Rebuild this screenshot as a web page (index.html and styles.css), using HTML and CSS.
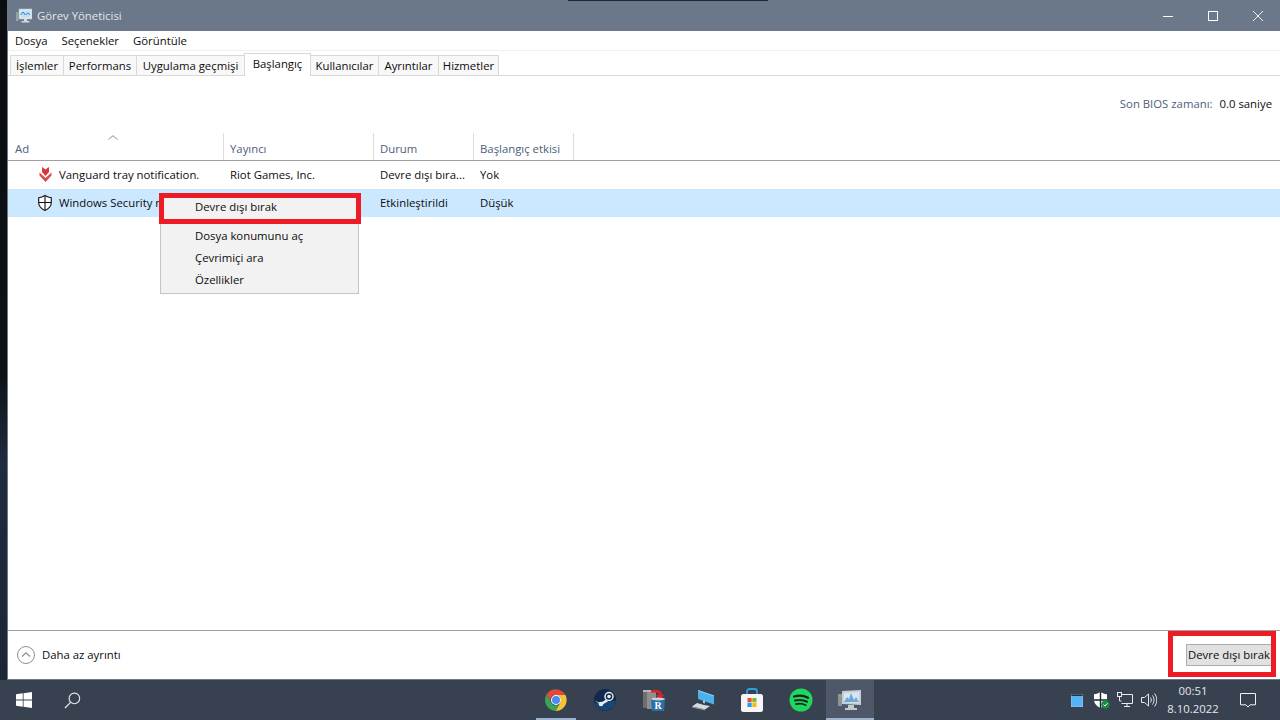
FILE: index.html
```html
<!DOCTYPE html>
<html lang="tr">
<head>
    <meta charset="UTF-8">
    <title>Görev Yöneticisi</title>
    <link rel="stylesheet" href="styles.css">
</head>
<body>
    <div class="desktop">
        <div class="window">
            <div class="titlebar">
                <svg class="app-icon" width="16" height="16" viewBox="0 0 16 16">
                    <rect x="0" y="4" width="2.5" height="9" fill="#9aa0a0"/>
                    <rect x="0.5" y="5" width="1.5" height="1.5" fill="#5fbf5f"/>
                    <rect x="3" y="1" width="13" height="10" fill="#e8ecef" stroke="#b9c0c6" stroke-width="0.6"/>
                    <rect x="4.5" y="2.5" width="10" height="7" fill="#bfe0f7"/>
                    <path d="M4.5 7l2.5-3 2.5 3 2-2 2.5 1.5" fill="none" stroke="#2b7fd0" stroke-width="1"/>
                    <path d="M8 11h3v2h2.5v1.5h-8V13H8z" fill="#d5d9dc"/>
                </svg>
                <span class="title-text">Görev Yöneticisi</span>
                <div class="window-controls">
                    <div class="win-btn"><svg width="10" height="10" viewBox="0 0 10 10"><path d="M0 5.5h10" stroke="#fff" fill="none"/></svg></div>
                    <div class="win-btn"><svg width="10" height="10" viewBox="0 0 10 10"><rect x="0.5" y="0.5" width="9" height="9" stroke="#fff" fill="none"/></svg></div>
                    <div class="win-btn"><svg width="10" height="10" viewBox="0 0 10 10"><path d="M0 0l10 10M10 0L0 10" stroke="#eef0f2" fill="none"/></svg></div>
                </div>
            </div>

            <div class="menubar">
                <span>Dosya</span>
                <span>Seçenekler</span>
                <span>Görüntüle</span>
            </div>

            <div class="tabs">
                <div class="tab">İşlemler</div>
                <div class="tab">Performans</div>
                <div class="tab">Uygulama geçmişi</div>
                <div class="tab active">Başlangıç</div>
                <div class="tab">Kullanıcılar</div>
                <div class="tab">Ayrıntılar</div>
                <div class="tab">Hizmetler</div>
            </div>

            <div class="content">
                <div class="bios-row">
                    <span class="bios-label">Son BIOS zamanı:</span>
                    <span>0.0 saniye</span>
                </div>

                <div class="table-head">
                    <div class="head-cell head-name">Ad
                        <svg class="sort-caret" width="10" height="5" viewBox="0 0 10 5"><path d="M0.5 4.5L5 0.7l4.5 3.8" fill="none" stroke="#8d8d8d"/></svg>
                    </div>
                    <div class="head-cell">Yayıncı</div>
                    <div class="head-cell">Durum</div>
                    <div class="head-cell">Başlangıç etkisi</div>
                </div>

                <div class="table-row">
                    <div class="name-cell">
                        <svg class="row-icon" width="16" height="18" viewBox="0 0 16 18">
                            <path d="M5 1l3.500 2.500L12 1v5l-3.500 4L5 6z" fill="#d9363c"/>
                            <path d="M2.500 6.500l6 5.500 6-5.500v3L8.500 16l-6-6.500z" fill="#e0474d"/>
                        </svg>
                        <span class="name-text">Vanguard tray notification.</span>
                    </div>
                    <div class="cell">Riot Games, Inc.</div>
                    <div class="cell">Devre dışı bıra...</div>
                    <div class="cell">Yok</div>
                </div>
                <div class="table-row selected">
                    <div class="name-cell">
                        <svg class="row-icon" width="16" height="18" viewBox="0 0 16 18">
                            <path d="M8 1.500c2 1.300 4 2 6.300 2.200v5c0 3.500-2.600 6-6.300 7.800-3.700-1.800-6.300-4.300-6.300-7.800v-5C4 3.500 6 2.800 8 1.500z" fill="#fff" stroke="#111" stroke-width="1.100"/>
                            <path d="M8 2v14M2 8.500h12" stroke="#111" stroke-width="1.100" fill="none"/>
                        </svg>
                        <span class="name-text">Windows Security n</span>
                    </div>
                    <div class="cell"></div>
                    <div class="cell">Etkinleştirildi</div>
                    <div class="cell">Düşük</div>
                </div>
            </div>

            <div class="footer">
                <div class="less-detail">
                    <svg width="18" height="18" viewBox="0 0 18 18">
                        <circle cx="9" cy="9" r="8.500" fill="#fff" stroke="#8e8e8e"/>
                        <path d="M5 10.500L9 6.800l4 3.700" fill="none" stroke="#8e8e8e" stroke-width="1.200"/>
                    </svg>
                    <span class="less-text">Daha az ayrıntı</span>
                </div>
                <button class="disable-btn" type="button">Devre dışı bırak</button>
            </div>

            <div class="context-menu">
                <div class="menu-item">Devre dışı bırak</div>
                <div class="menu-sep"></div>
                <div class="menu-item">Dosya konumunu aç</div>
                <div class="menu-item">Çevrimiçi ara</div>
                <div class="menu-item">Özellikler</div>
            </div>
            <div class="red-box red-menu"></div>
            <div class="red-box red-button"></div>
        </div>
    </div>

    <div class="taskbar">
        <div class="task-left">
            <div class="task-slot">
                <svg width="16" height="16" viewBox="0 0 18 18"><path d="M0 2.600l7.600-1.100v7H0zM8.500 1.400L18 0v8.500H8.500zM0 9.500h7.600v7L0 15.400zM8.500 9.500H18V18l-9.500-1.400z" fill="#fff"/></svg>
            </div>
            <div class="task-slot">
                <svg width="17" height="17" viewBox="0 0 18 18"><circle cx="11" cy="6.800" r="5.600" fill="none" stroke="#e8eaec" stroke-width="1.200"/><path d="M7 11L1 17" stroke="#e8eaec" stroke-width="1.300"/></svg>
            </div>
        </div>

        <div class="task-apps">
            <div class="app-slot running">
                <svg width="24" height="24" viewBox="0 0 24 24">
                    <path d="M12 7h9.500A11 11 0 0 0 2.500 6.500l4.700 8.200A5 5 0 0 1 12 7z" fill="#e04a3a"/>
                    <path d="M21.500 7H12a5 5 0 0 1 4.300 7.500L11.600 23A11 11 0 0 0 21.500 7z" fill="#f6c333"/>
                    <path d="M2.500 6.500A11 11 0 0 0 11.600 23l4.700-8.500a5 5 0 0 1-9.100.2z" fill="#3aa655"/>
                    <circle cx="12" cy="12" r="5" fill="#fff"/>
                    <circle cx="12" cy="12" r="4" fill="#4a8bf0"/>
                </svg>
            </div>
            <div class="app-slot">
                <svg width="24" height="24" viewBox="0 0 24 24">
                    <circle cx="12" cy="12" r="11" fill="#12294f"/>
                    <path d="M1.500 15a11 11 0 0 0 21 0c.7-3-1-3-3-2l-8 2-6 0z" fill="#17548a" opacity="0.7"/>
                    <circle cx="16" cy="8.500" r="4" fill="none" stroke="#e8edf2" stroke-width="1.500"/>
                    <circle cx="16" cy="8.500" r="1.800" fill="#e8edf2"/>
                    <path d="M1.500 12.500l6 2.500 5.500-3.500 2 2-6.500 3.500z" fill="#e8edf2"/>
                    <circle cx="8" cy="16" r="2.300" fill="#e8edf2"/>
                </svg>
            </div>
            <div class="app-slot">
                <svg width="24" height="24" viewBox="0 0 24 24">
                    <rect x="1" y="3" width="8" height="17" fill="#6e6e6e"/>
                    <rect x="5" y="2" width="9" height="19" fill="#8f8f8f"/>
                    <rect x="1" y="2" width="12" height="2" fill="#b5b5b5"/>
                    <path d="M9 2h5c4 0 6 2 6 5h2.500L18 12l-4-5h3c0-1.500-1-2.500-3-2.500H9z" fill="#d92328"/>
                    <path d="M9 11h14l-1 12H10z" fill="#2c6ea8"/>
                    <ellipse cx="16" cy="11" rx="7" ry="1.500" fill="#c9d3da"/>
                    <text class="bin-letter" x="16" y="21">R</text>
                </svg>
            </div>
            <div class="app-slot">
                <svg width="24" height="24" viewBox="0 0 24 24">
                    <path d="M7 2l16 5.500v9L7 11z" fill="#4cb0ee"/>
                    <path d="M7 2l16 5.500v1L7 3z" fill="#8ccff5"/>
                    <path d="M12 12l2 .6v3l-2-.6z" fill="#9fc6de"/>
                    <path d="M6 15l7 2 6 1-5 3.500-13-3z" fill="#d7dadd"/>
                    <path d="M1 18.500l13 3v1l-13-3z" fill="#8f959b"/>
                </svg>
            </div>
            <div class="app-slot">
                <svg width="24" height="24" viewBox="0 0 24 24">
                    <path d="M7 7V3.500C7 2 8 1 9.500 1h5C16 1 17 2 17 3.500V7" fill="none" stroke="#2d9fe0" stroke-width="1.800"/>
                    <rect x="1" y="6" width="22" height="18" rx="2.500" fill="#f6f6f6"/>
                    <rect x="7.500" y="10" width="4.200" height="4.200" fill="#e8502f"/>
                    <rect x="12.300" y="10" width="4.200" height="4.200" fill="#7fba2c"/>
                    <rect x="7.500" y="14.800" width="4.200" height="4.200" fill="#1f9fe8"/>
                    <rect x="12.300" y="14.800" width="4.200" height="4.200" fill="#fdb913"/>
                </svg>
            </div>
            <div class="app-slot">
                <svg width="24" height="24" viewBox="0 0 24 24">
                    <circle cx="12" cy="12" r="11.500" fill="#1ed760"/>
                    <path d="M5 8.500c4.500-1.300 10-1 14 1.200" fill="none" stroke="#16241b" stroke-width="2.300" stroke-linecap="round"/>
                    <path d="M6 12.500c4-1 8.500-.7 12 1.200" fill="none" stroke="#16241b" stroke-width="2" stroke-linecap="round"/>
                    <path d="M7 16.200c3.300-.8 7-.5 9.800 1" fill="none" stroke="#16241b" stroke-width="1.700" stroke-linecap="round"/>
                </svg>
            </div>
            <div class="app-slot running active">
                <svg width="24" height="24" viewBox="0 0 24 24">
                    <rect x="0" y="6" width="4" height="12" fill="#8d9396"/>
                    <rect x="1" y="7" width="2" height="2" fill="#62c462"/>
                    <path d="M4 3l19-1v15L4 16z" fill="#c9ced2"/>
                    <path d="M6 5l15-1v11L6 14z" fill="#d8e6f0"/>
                    <path d="M6 14l3-5 2 2 2-6 3 7 2-3 3 5z" fill="#6fa8d8"/>
                    <path d="M10 17h6v3h3v2H7v-2h3z" fill="#c4c9cd"/>
                </svg>
            </div>
        </div>

        <div class="tray">
            <div class="tray-slot">
                <svg width="12" height="13" viewBox="0 0 12 13"><rect width="12" height="13" fill="#54b4f5"/><rect width="12" height="2" fill="#23303f"/><rect x="0" y="0" width="12" height="13" fill="none" stroke="#c3e4fa" stroke-width="0.500"/></svg>
            </div>
            <div class="tray-slot">
                <svg width="17" height="17" viewBox="0 0 17 17">
                    <path d="M7.500 0c2 1.300 4 2 6.500 2.200v5.500c0 3.700-2.700 6.500-6.500 8.300C3.700 14.200 1 11.400 1 7.700V2.200C3.500 2 5.500 1.300 7.500 0z" fill="#fff"/>
                    <path d="M7.500 0v16M1 8h13" stroke="#1d2530" stroke-width="1.400"/>
                    <circle cx="12.500" cy="12.500" r="4.300" fill="#158a45"/>
                    <path d="M10.500 12.600l1.500 1.400 2.500-2.800" fill="none" stroke="#fff" stroke-width="1"/>
                </svg>
            </div>
            <div class="tray-slot">
                <svg width="16" height="16" viewBox="0 0 16 16" fill="none" stroke="#e8eaec">
                    <rect x="0.500" y="0.500" width="4" height="4"/>
                    <path d="M2.500 4.500V9h2M5 2.500h10.500v9H4.500M10 11.500v3M7 14.500h6"/>
                </svg>
            </div>
            <div class="tray-slot">
                <svg width="16" height="16" viewBox="0 0 16 16" fill="none" stroke="#e8eaec">
                    <path d="M0.500 5.500h3L7.500 2v12l-4-3.500h-3z"/>
                    <path d="M9.500 5.500c1 1.500 1 3.500 0 5M11.500 3.500c2 3 2 6 0 9M13.500 1.500c3 4 3 9 0 13"/>
                </svg>
            </div>
            <div class="clock">
                <div>00:51</div>
                <div>8.10.2022</div>
            </div>
            <div class="notify">
                <svg width="16" height="15" viewBox="0 0 16 15"><path d="M0.500 0.500h15v11.300H10L8 14l-2-2.200H0.500z" fill="none" stroke="#f0f1f3"/></svg>
            </div>
        </div>
    </div>
</body>
</html>
```

FILE: styles.css
```css
body {
    margin: 0;
    height: 720px;
    display: flex;
    flex-direction: column;
    overflow: hidden;
    font-family: "Open Sans", "Noto Sans", sans-serif;
    font-size: 11.35px;
    color: #0d0d0d;
}
.desktop {
    flex: 1;
    min-height: 0;
    display: flex;
    background: linear-gradient(180deg, #0c0d10 0%, #0d1215 55%, #1f2c3e 68%, #1c2636 100%);
}

/* window */
.window {
    position: relative;
    flex: 1;
    display: flex;
    flex-direction: column;
    margin-left: 7px;
    border-left: 1px solid #6a7889;
    border-bottom: 1px solid #6a7889;
    background: #fff;
}
.titlebar {
    position: relative;
    height: 31px;
    flex-shrink: 0;
    display: flex;
    align-items: center;
    padding-left: 8px;
    background: #6a7889;
    color: #e3e6ea;
}
.titlebar::before {
    content: "";
    position: absolute;
    top: 0;
    left: 560px;
    width: 200px;
    height: 1px;
    background: #23272d;
}
.title-text {
    margin-left: 5px;
}
.window-controls {
    display: flex;
    margin-left: auto;
}
.win-btn {
    width: 45px;
    height: 31px;
    display: flex;
    align-items: center;
    justify-content: center;
}
.menubar {
    height: 19px;
    flex-shrink: 0;
    display: flex;
    align-items: center;
    gap: 14px;
    padding-left: 7px;
    border-bottom: 1px solid #f0f0f0;
}
.tabs {
    height: 25px;
    box-sizing: border-box;
    flex-shrink: 0;
    display: grid;
    grid-template-columns: 53px 73px 108px 66px 68px 60px 60px;
    align-items: end;
    justify-content: start;
    padding-left: 2px;
    border-bottom: 1px solid #d9d9d9;
}
.tab {
    height: 20px;
    box-sizing: border-box;
    display: flex;
    align-items: center;
    justify-content: center;
    white-space: nowrap;
    background: #f8f8f8;
    border: 1px solid #d9d9d9;
    border-bottom: none;
    margin-right: -1px;
}
.tab.active {
    position: relative;
    height: 23px;
    margin-bottom: -1px;
    padding-bottom: 3px;
    background: #fff;
}

/* startup table */
.content {
    flex: 1;
    min-height: 0;
}
.bios-row {
    height: 57px;
    box-sizing: border-box;
    display: flex;
    justify-content: flex-end;
    gap: 7px;
    padding: 20px 8px 0 0;
}
.bios-label {
    color: #4c607a;
}
.table-head,
.table-row {
    display: grid;
    grid-template-columns: 216px 150px 100px 100px;
}
.table-head {
    height: 28px;
    box-sizing: border-box;
    border-bottom: 1px solid #a0a0a0;
}
.head-cell {
    position: relative;
    display: flex;
    align-items: flex-end;
    padding: 0 0 4px 6px;
    color: #4c607a;
    border-right: 1px solid #dedede;
}
.head-name {
    padding-left: 7px;
}
.sort-caret {
    position: absolute;
    top: 2px;
    left: 100px;
}
.table-row {
    height: 28px;
    box-sizing: border-box;
    padding-bottom: 2px;
    align-items: center;
}
.table-row.selected {
    background: #cce8ff;
}
.name-cell {
    display: flex;
    align-items: center;
    padding-left: 29px;
    white-space: nowrap;
}
.row-icon {
    flex-shrink: 0;
    position: relative;
    top: 1px;
}
.name-text {
    margin-left: 6px;
}
.cell {
    padding-left: 6px;
    white-space: nowrap;
}

/* footer */
.footer {
    height: 49px;
    box-sizing: border-box;
    flex-shrink: 0;
    display: flex;
    align-items: center;
    justify-content: space-between;
    padding: 0 8px 0 9px;
    border-top: 1px solid #a0a0a0;
}
.less-detail {
    display: flex;
    align-items: center;
    gap: 7px;
}
.less-text {
    padding-bottom: 2px;
}
.disable-btn {
    width: 86px;
    height: 22px;
    padding: 0 0 2px;
    font: inherit;
    color: #0d0d0d;
    white-space: nowrap;
    background: #e1e1e1;
    border: 1px solid #adadad;
}

/* context menu + annotations */
.context-menu {
    position: absolute;
    top: 195px;
    left: 152px;
    width: 199px;
    box-sizing: border-box;
    padding: 1px;
    background: #f2f2f2;
    border: 1px solid #c4c4c4;
}
.menu-item {
    height: 22px;
    box-sizing: border-box;
    display: flex;
    align-items: center;
    padding: 0 0 4px 33px;
}
.menu-sep {
    height: 1px;
    margin: 3px 2px 3px 2px;
    background: #ccc;
}
.red-box {
    position: absolute;
    box-sizing: border-box;
    border: 5px solid #ed1c24;
}
.red-menu {
    top: 193px;
    left: 151px;
    width: 202px;
    height: 31px;
}
.red-button {
    top: 631px;
    left: 1160px;
    width: 108px;
    height: 46px;
}

/* taskbar */
.taskbar {
    height: 40px;
    flex-shrink: 0;
    display: flex;
    background: #384150;
    color: #e6e8eb;
}
.task-left {
    width: 531px;
    display: flex;
}
.task-slot {
    width: 48px;
    display: flex;
    align-items: center;
    justify-content: center;
}
.task-apps {
    display: flex;
}
.app-slot {
    position: relative;
    width: 49px;
    display: flex;
    align-items: center;
    justify-content: center;
}
.app-slot.active {
    width: 48px;
    margin-left: 1px;
    background: #4e5868;
}
.app-slot.running::after {
    content: "";
    position: absolute;
    left: 5px;
    right: 4px;
    bottom: 0;
    height: 2px;
    background: #9db4d0;
}
.app-slot.active::after {
    left: 0;
    right: 0;
}
.bin-letter {
    font-family: "Liberation Serif", serif;
    font-size: 10px;
    font-weight: bold;
    fill: #fff;
    text-anchor: middle;
}
.tray {
    display: flex;
    margin-left: auto;
    padding-right: 10px;
}
.tray-slot {
    width: 24px;
    display: flex;
    align-items: center;
    justify-content: center;
}
.clock {
    width: 64px;
    display: flex;
    flex-direction: column;
    justify-content: center;
    gap: 2px;
    text-align: center;
    line-height: 16px;
}
.notify {
    width: 45px;
    display: flex;
    align-items: center;
    justify-content: center;
}
```
